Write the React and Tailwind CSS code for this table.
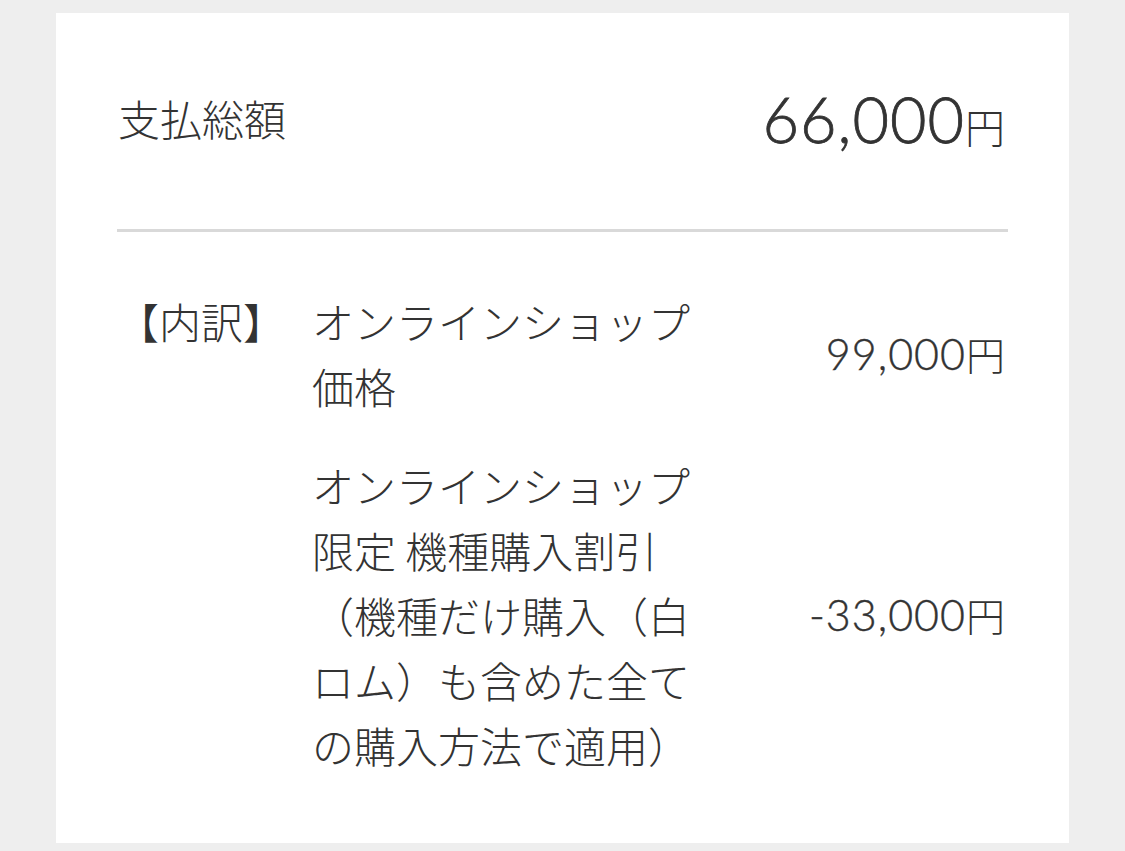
import React from 'react';

const jp = "font-['Noto_Sans_CJK_JP',sans-serif]";
const num = "font-['Lato','Noto_Sans_CJK_JP',sans-serif]";

const items = [
  { name: 'オンラインショップ価格', amount: '99,000' },
  {
    name: 'オンラインショップ限定 機種購入割引（機種だけ購入（白ロム）も含めた全ての購入方法で適用）',
    amount: '-33,000',
  },
];

export default function App() {
  return (
    <div className="min-h-screen bg-[#eeeeee] pt-[13px] pb-[8px] text-[#333333]">
      <div className="ml-[56px] w-[1013px] bg-white px-[61px]">
        {/* Total */}
        <div className="flex h-[219px] items-center justify-between border-b-[3px] border-[#d9d9d9] pb-[6px]">
          <span className={`${jp} font-light pl-[1px] text-[42px] leading-none`}>支払総額</span>
          <span className="flex items-baseline pr-[3px]">
            <span className={`${num} font-light text-[63px] leading-none tracking-[1px] [-webkit-text-stroke:0.8px_#333333]`}>66,000</span>
            <span className={`${jp} font-light text-[40px] leading-none`}>円</span>
          </span>
        </div>

        {/* Breakdown */}
        <div className="flex pt-[56px] pb-[66px]">
          <div className={`${jp} w-[195px] shrink-0 text-[42px] leading-[65px] font-light`}>【内訳】</div>
          <div className="flex flex-1 flex-col gap-[34px]">
            {items.map((item) => (
              <div key={item.amount} className="flex items-center justify-between">
                <div className={`${jp} font-light w-[392px] text-[42px] leading-[65px]`}>{item.name}</div>
                <div className="flex items-baseline pr-[3px]">
                  <span className={`${num} font-light text-[43px] leading-none tracking-[1px] [-webkit-text-stroke:0.4px_#333333]`}>{item.amount}</span>
                  <span className={`${jp} font-light text-[39px] leading-none`}>円</span>
                </div>
              </div>
            ))}
          </div>
        </div>
      </div>
    </div>
  );
}
